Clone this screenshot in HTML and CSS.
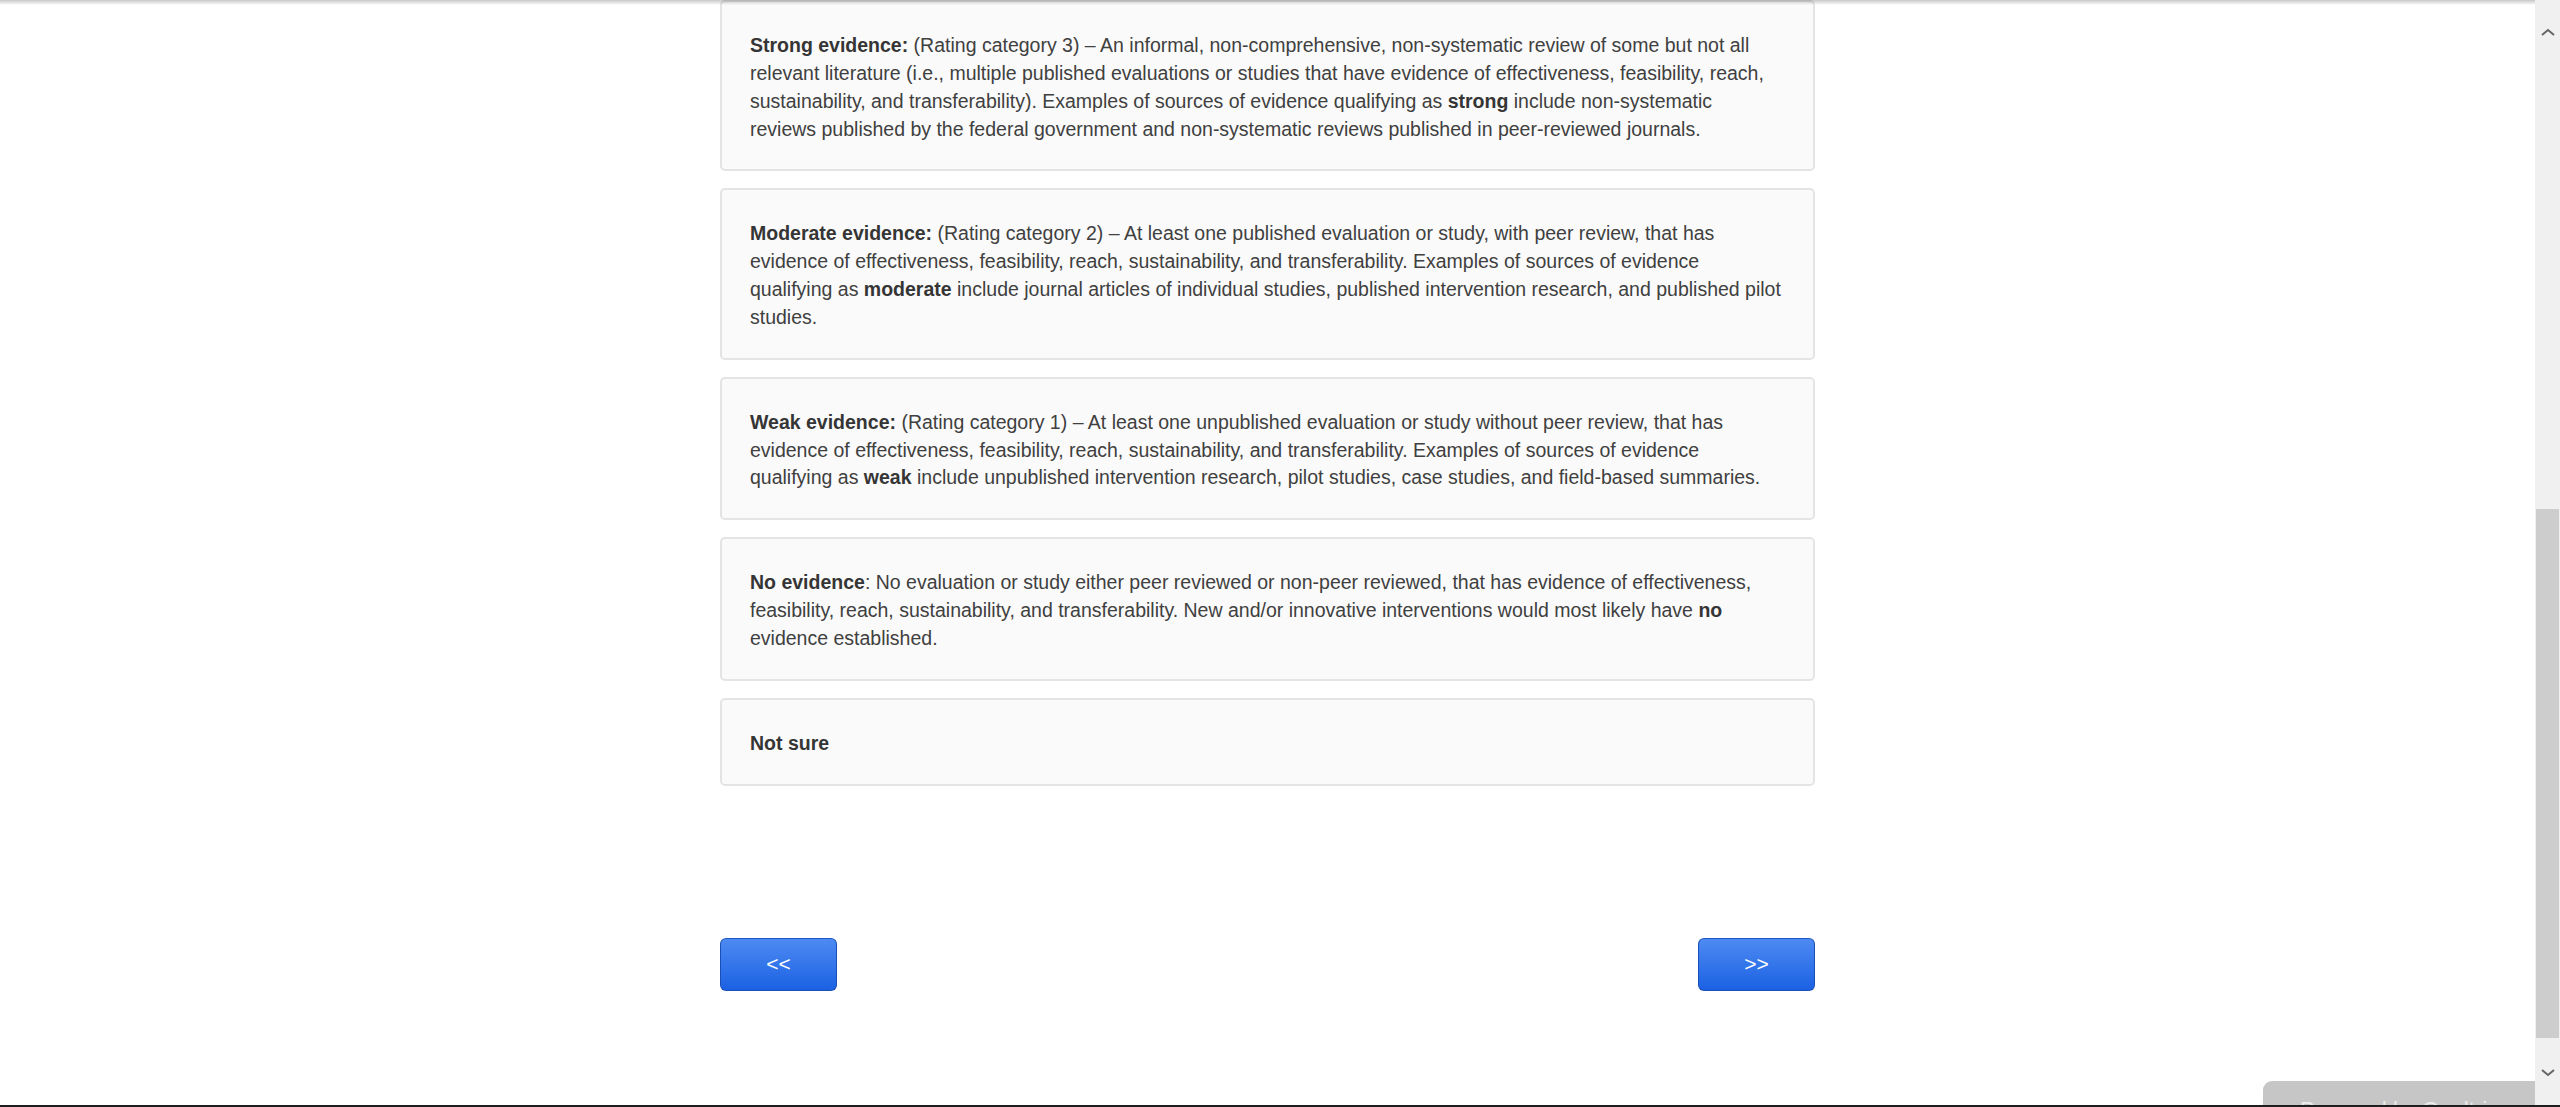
FILE: index.html
```html
<!DOCTYPE html>
<html lang="en">
  <head>
    <meta charset="UTF-8" />
    <meta name="viewport" content="width=device-width, initial-scale=1.0" />
    <title>Survey</title>
    <link rel="stylesheet" href="styles.css">
  </head>
  <body>
    <div class="topshadow"></div>
    <div class="page">
      <div class="survey">
        <div class="choices">
          <label class="choice">
            <b>Strong evidence:</b> (Rating category 3) – An informal, non-comprehensive, non-systematic review of some but not all relevant literature (i.e., multiple published evaluations or studies that have evidence of effectiveness, feasibility, reach, sustainability, and transferability). Examples of sources of evidence qualifying as <b>strong</b> include non-systematic reviews published by the federal government and non-systematic reviews published in peer-reviewed journals.
          </label>
          <label class="choice">
            <b>Moderate evidence:</b> (Rating category 2) – At least one published evaluation or study, with peer review, that has evidence of effectiveness, feasibility, reach, sustainability, and transferability. Examples of sources of evidence qualifying as <b>moderate</b> include journal articles of individual studies, published intervention research, and published pilot studies.
          </label>
          <label class="choice">
            <b>Weak evidence:</b> (Rating category 1) – At least one unpublished evaluation or study without peer review, that has evidence of effectiveness, feasibility, reach, sustainability, and transferability. Examples of sources of evidence qualifying as <b>weak</b> include unpublished intervention research, pilot studies, case studies, and field-based summaries.
          </label>
          <label class="choice">
            <b>No evidence</b>: No evaluation or study either peer reviewed or non-peer reviewed, that has evidence of effectiveness, feasibility, reach, sustainability, and transferability. New and/or innovative interventions would most likely have <b>no</b> evidence established.
          </label>
          <label class="choice">
            <b>Not sure</b>
          </label>
        </div>
        <div class="nav">
          <button type="button" id="prev">&lt;&lt;</button>
          <button type="button" id="next">&gt;&gt;</button>
        </div>
      </div>
    </div>

    <div class="badge">Powered by Qualtrics</div>
    <div class="bottomline"></div>

    <div class="scrollbar">
      <svg class="arrow" width="14" height="8" viewBox="0 0 14 8"><path d="M1 7 L7 2 L13 7" fill="none" stroke="#666" stroke-width="2"/></svg>
      <div class="thumb"></div>
      <svg class="arrow" width="14" height="8" viewBox="0 0 14 8"><path d="M1 1 L7 6 L13 1" fill="none" stroke="#666" stroke-width="2"/></svg>
    </div>
  </body>
</html>
```

FILE: styles.css
```css
* {
  box-sizing: border-box;
  padding: 0;
  margin: 0;
}
html,
body {
  height: 100%;
  overflow: hidden;
}
body {
  background-color: #fff;
  font-family: "Liberation Sans", Arial, sans-serif;
  font-size: 19.5px;
  color: #404040;
}
.topshadow {
  position: fixed;
  top: 0;
  left: 0;
  right: 25px;
  height: 5px;
  background: linear-gradient(rgba(0, 0, 0, 0.22), rgba(0, 0, 0, 0));
  z-index: 2;
}
.page {
  margin-right: 25px;
}
.survey {
  width: 1095px;
  margin: 0 auto;
}
.choices {
  display: flex;
  flex-direction: column;
  gap: 17px;
}
.choice {
  display: block;
  background-color: #fafafa;
  border: 2px solid #e4e4e4;
  border-radius: 5px;
  padding: 30px 30px 26px 28px;
  line-height: 1.42857;
}
.choice b {
  color: #353535;
}
.nav {
  display: flex;
  justify-content: space-between;
  margin-top: 152px;
}
.nav button {
  width: 117px;
  height: 53px;
  border: 1px solid #1a4fb5;
  border-top-color: #1f57c4;
  border-radius: 6px;
  background: linear-gradient(#4d8af2, #1b61e3);
  color: #fff;
  font-family: "Liberation Sans", Arial, sans-serif;
  font-size: 21px;
  cursor: pointer;
}
.badge {
  position: fixed;
  right: 25px;
  bottom: 0;
  width: 272px;
  height: 26px;
  background-color: #c6c6c6;
  border-top-left-radius: 9px;
  color: #ececec;
  font-size: 22px;
  line-height: 25px;
  padding: 16px 0 0 37px;
  white-space: nowrap;
  overflow: hidden;
}
.bottomline {
  position: fixed;
  left: 0;
  right: 0;
  bottom: 0;
  height: 2px;
  background-color: #1e1e1e;
  z-index: 3;
}
.scrollbar {
  position: fixed;
  top: 0;
  right: 0;
  bottom: 0;
  width: 25px;
  background-color: #f0f0f0;
  display: flex;
  flex-direction: column;
  align-items: center;
}
.scrollbar .arrow {
  display: block;
  margin-top: 28px;
}
.scrollbar .thumb {
  width: 23px;
  height: 529px;
  margin: 473px 0 0 0;
  background-color: #cdcdcd;
}
.scrollbar .arrow:last-child {
  margin-top: 31px;
}
```
